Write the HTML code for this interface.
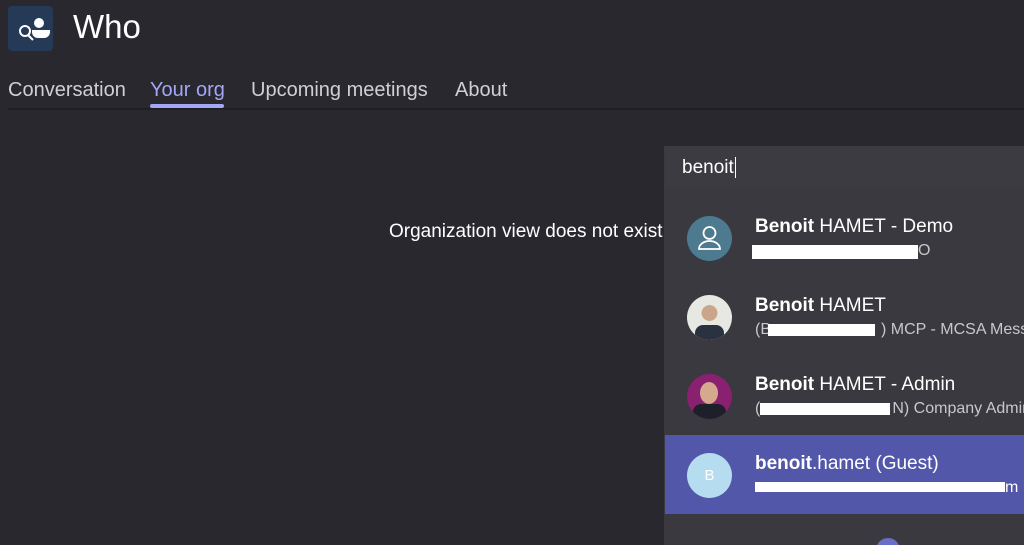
<!DOCTYPE html>
<html style="width:1024px;height:545px;overflow:hidden"><head><style>
body{margin:0;width:1024px;height:545px;background:#29282e;font-family:"Liberation Sans",sans-serif;position:relative;overflow:hidden;color:#fff}
.a{position:absolute}
.tab{position:absolute;top:79px;font-size:20px;color:#d0d0d4}
.row{position:absolute;left:665px;width:359px;height:79px;overflow:hidden}
.av{position:absolute;left:22px;top:18px;width:45px;height:45px;border-radius:50%}
.nm{position:absolute;left:90px;top:18px;font-size:19px;white-space:nowrap}
.sb{position:absolute;left:90px;top:44px;font-size:16px;color:#c8c8cc;white-space:nowrap}
.red{position:absolute;background:#fff;height:12px}
</style></head><body>
<div class="a" style="left:8px;top:6px;width:45px;height:45px;background:#253a56;border-radius:4px">
<svg width="45" height="45" viewBox="0 0 45 45"><circle cx="17" cy="25" r="5" fill="none" stroke="#fff" stroke-width="2"/><line x1="20" y1="29" x2="25" y2="34" stroke="#fff" stroke-width="2"/><circle cx="31" cy="17" r="5" fill="#fff"/><path d="M24 24h18v2a6 6 0 0 1-6 6h-6a6 6 0 0 1-6-6z" fill="#fff"/></svg></div>
<div class="a" style="left:73px;top:8px;font-size:33px;color:#fff">Who</div>
<div class="tab" style="left:8px">Conversation</div>
<div class="tab" style="left:150px;color:#a4a7f5">Your org</div>
<div class="a" style="left:150px;top:104px;width:74px;height:4px;background:#a4a7f5;border-radius:2px"></div>
<div class="tab" style="left:251px">Upcoming meetings</div>
<div class="tab" style="left:455px">About</div>
<div class="a" style="left:8px;top:108px;width:1016px;height:2px;background:#1f1e23"></div>
<div class="a" style="left:389px;top:221px;font-size:19px;white-space:nowrap">Organization view does not exist</div>
<div class="a" style="left:664px;top:146px;width:360px;height:399px;background:#3a393f;overflow:hidden">
<div class="a" style="left:1px;top:0;width:359px;height:42px;background:#3c3b41"></div>
<div class="a" style="left:18px;top:11px;font-size:19px">benoit<span style="border-left:1px solid #fff;margin-left:1px"></span></div>
<div class="a" style="left:212px;top:392px;width:24px;height:24px;border-radius:50%;background:#6a6ec4"></div>
</div>
<div class="row" style="top:198px"><div class="av" style="background:#4d7a8f"><svg width="45" height="45"><circle cx="22.5" cy="17" r="6" fill="none" stroke="#fff" stroke-width="1.8"/><path d="M12 33a10.5 8 0 0 1 21 0z" fill="none" stroke="#fff" stroke-width="1.8"/></svg></div><div class="nm"><b>Benoit</b> HAMET - Demo</div><div class="red" style="left:87px;top:47px;width:166px;height:14px"></div><div class="sb" style="left:253px">O</div></div>
<div class="row" style="top:277px"><div class="av" style="background:radial-gradient(circle at 50% 40%,#c9a58a 0 22%,#e8e8e2 23%);overflow:hidden"><div style="position:absolute;left:8px;top:30px;width:29px;height:20px;background:#2a3140;border-radius:8px 8px 0 0"></div></div><div class="nm"><b>Benoit</b> HAMET</div><div class="sb">(B<span style="display:inline-block;width:110px"></span>) MCP - MCSA Messaging</div><div class="red" style="left:103px;top:47px;width:107px"></div></div>
<div class="row" style="top:356px"><div class="av" style="background:#8a2070;overflow:hidden"><div style="position:absolute;left:13px;top:8px;width:18px;height:22px;background:#d6a98e;border-radius:50%"></div><div style="position:absolute;left:6px;top:30px;width:33px;height:20px;background:#1d2028;border-radius:8px 8px 0 0"></div></div><div class="nm"><b>Benoit</b> HAMET - Admin</div><div class="sb">(<span style="display:inline-block;width:132px"></span>N) Company Administrator</div><div class="red" style="left:95px;top:47px;width:130px"></div></div>
<div class="row" style="top:435px;background:#5357a9"><div class="av" style="background:#b6dcf0;color:#fff;font-size:15px;text-align:center;line-height:45px">B</div><div class="nm"><b>benoit</b>.hamet (Guest)</div><div class="red" style="left:90px;top:47px;width:250px;height:10px"></div><div class="sb" style="left:340px;color:#fff">m</div></div>
</body></html>
